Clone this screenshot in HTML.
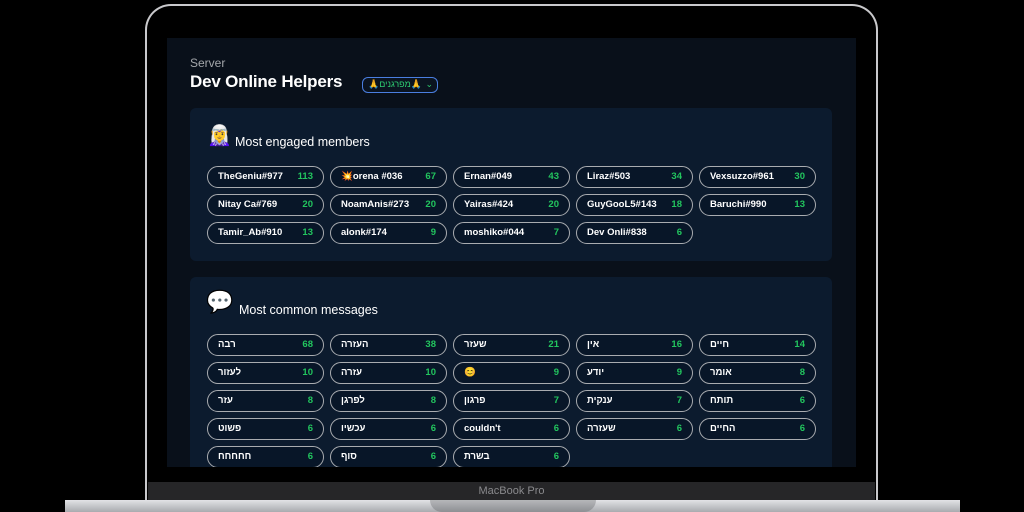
<!DOCTYPE html>
<html><head><meta charset="utf-8"><style>
*{margin:0;padding:0;box-sizing:border-box}
body{width:1024px;height:512px;background:#000;position:relative;overflow:hidden;font-family:"Liberation Sans","Noto Sans CJK SC",sans-serif}
.bezel{position:absolute;left:145px;top:4px;width:733px;height:500px;border:2px solid #c9c9cc;border-bottom:none;border-radius:26px 26px 0 0;background:#000}
.screen{position:absolute;left:167px;top:38px;width:689px;height:429px;background:#09101a;overflow:hidden}
.chin{position:absolute;left:148px;top:482px;width:727px;height:18px;background:#262628;color:#8a8a8d;font-size:11px;text-align:center;line-height:19px}
.base{position:absolute;left:65px;top:500px;width:895px;height:12px;background:linear-gradient(#e2e3e6,#a9abaf)}
.notch{position:absolute;left:430px;top:500px;width:166px;height:12px;background:linear-gradient(#b6b7ba,#8d8f93);border-radius:0 0 12px 12px}
.lbl{position:absolute;left:23px;top:18px;color:#a4a7ab;font-size:12px}
.title{position:absolute;left:23px;top:34px;color:#fff;font-size:17px;font-weight:bold;letter-spacing:-0.2px}
.sel{position:absolute;left:195px;top:39px;width:76px;height:16px;border:1.5px solid #4a7ee0;border-radius:6px;background:#0b1420;font-size:9px;color:#2ecc71;padding-left:5px;line-height:13px}
.sel span{position:absolute;right:4px;top:0;color:#2ecc71}
.card{position:absolute;left:23px;width:642px;background:#0c1b2e;border-radius:6px}
.ct{position:absolute;color:#fff;font-size:12.5px}
.pill{position:absolute;width:117px;height:22px;border:1.5px solid #a9acb0;border-radius:11px;background:#081628;color:#fff;font-size:9.5px;font-weight:bold;line-height:20px;padding:0 10px}
.pill b{position:absolute;right:10px;top:0;color:#22c55e}
.emo{position:absolute;font-size:20px}
</style></head><body>
<div class="bezel"></div>
<div class="screen">
<div class="lbl">Server</div>
<div class="title">Dev Online Helpers</div>
<div class="sel">🙏מפרגנים🙏<span>⌄</span></div>
<div class="card" style="top:70px;height:153px">
<div class="emo" style="left:17px;top:15px">🧝‍♀️</div>
<div class="ct" style="left:45px;top:27px">Most engaged members</div>
</div>
<div class="card" style="top:239px;height:200px">
<div class="emo" style="left:16px;top:12px;font-size:22px">💬</div>
<div class="ct" style="left:49px;top:26px">Most common messages</div>
</div>
<div id="p"></div>
</div>
<div class="chin">MacBook Pro</div>
<div class="base"></div><div class="notch"></div>
<script>
var a=[["TheGeniu#977",113],["💥orena #036",67],["Ernan#049",43],["Liraz#503",34],["Vexsuzzo#961",30],["Nitay Ca#769",20],["NoamAnis#273",20],["Yairas#424",20],["GuyGooL5#143",18],["Baruchi#990",13],["Tamir_Ab#910",13],["alonk#174",9],["moshiko#044",7],["Dev Onli#838",6]];
var b=[["רבה",68],["העזרה",38],["שעזר",21],["אין",16],["חיים",14],["לעזור",10],["עזרה",10],["😊",9],["יודע",9],["אומר",8],["עזר",8],["לפרגן",8],["פרגון",7],["ענקית",7],["תותח",6],["פשוט",6],["עכשיו",6],["couldn't",6],["שעזרה",6],["החיים",6],["חחחחח",6],["סוף",6],["בשרת",6]];
var h="";
function r(l,t){l.forEach(function(x,i){h+='<div class="pill" style="left:'+(40+(i%5)*123)+'px;top:'+(t+Math.floor(i/5)*28)+'px">'+x[0]+'<b>'+x[1]+'</b></div>';});}
r(a,128);r(b,296);
document.getElementById("p").innerHTML=h;
</script>
</body></html>
